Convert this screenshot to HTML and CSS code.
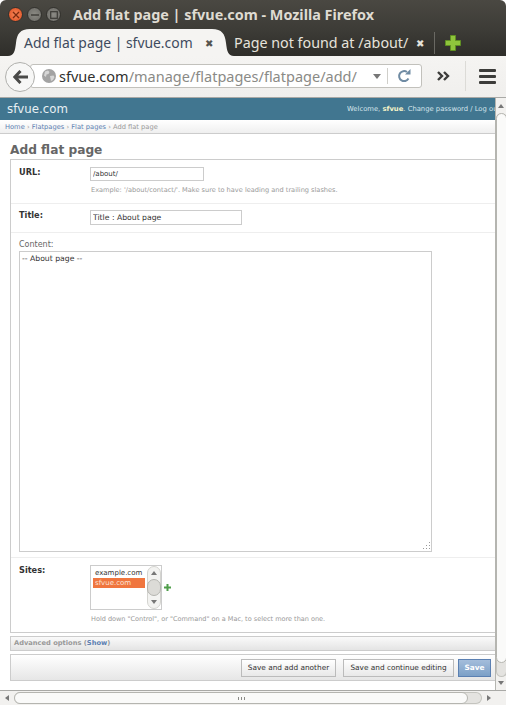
FILE: index.html
```html
<!doctype html>
<html>
<head>
<meta charset="UTF-8">
<title>Add flat page | sfvue.com</title>
	<link rel="stylesheet" href="styles.css">
</head>

<body>
<div class="window">
	<div class="titlebar">
		<span class="winbtn winclose"><svg width="8" height="8" viewBox="0 0 8 8"><path d="M1 1l6 6M7 1l-6 6" stroke="#7a2a10" stroke-width="1.3"/></svg></span>
		<span class="winbtn winmin"><svg width="8" height="8" viewBox="0 0 8 8"><path d="M0 4h8" stroke="#3b3a36" stroke-width="1.4"/></svg></span>
		<span class="winbtn winmax"><svg width="8" height="8" viewBox="0 0 8 8"><rect x=".7" y=".7" width="6.6" height="6.6" fill="none" stroke="#3b3a36" stroke-width="1.2"/></svg></span>
		<span class="wintitle">Add flat page | sfvue.com - Mozilla Firefox</span>
	</div>

	<div class="tabbar">
		<div class="tab active">
			<svg class="tabshape" viewBox="0 0 226 27" preserveAspectRatio="none"><path d="M0 27C6 27 7 22 8 14C9 5 12 0 22 0H204C214 0 217 5 218 14C219 22 220 27 226 27Z" fill="#f5f4f2"/></svg>
			<span class="tabtext">Add flat page | sfvue.com</span>
			<span class="tabx">&#10006;</span>
		</div>
		<div class="tab other">
			<span class="tabtext">Page not found at /about/</span>
			<span class="tabx">&#10006;</span>
		</div>
		<span class="tabsep"></span>
		<svg class="newtab" width="16" height="16" viewBox="0 0 16 16"><path d="M5.5 0.5h5v5h5v5h-5v5h-5v-5h-5v-5h5z" fill="#8fc43c" stroke="#5f8f22"/></svg>
	</div>

	<div class="navbar">
		<div class="urlbar">
			<svg class="globe" width="14" height="14" viewBox="0 0 14 14"><circle cx="7" cy="7" r="7" fill="#a3a3a3"/><path d="M3 2.5l3-1 1.5 1.5-1 2-2 .5-.5 2.5-2-1.5zM8 7l3.500-.5 1 1.500-1.500 3-2 1-.5-2.500z" fill="#d6d6d6"/></svg>
			<span class="url"><span class="host">sfvue.com</span>/manage/flatpages/flatpage/add/</span>
			<span class="urldrop"></span>
			<span class="urlsep"></span>
			<svg class="reload" width="14" height="14" viewBox="0 0 14 14"><path d="M11.500 9.500A5 5 0 1 1 10 3" fill="none" stroke="#6f8ba3" stroke-width="2"/><path d="M8 5.500h5.500V0z" fill="#6f8ba3"/></svg>
		</div>
		<div class="backbtn">
			<svg width="15" height="14" viewBox="0 0 15 14"><path d="M7.500 1L1.800 7l5.700 6M2.500 7H15" fill="none" stroke="#4a4a48" stroke-width="3"/></svg>
		</div>
		<svg class="chevrons" width="14" height="10" viewBox="0 0 14 10"><path d="M1 1l4 4-4 4M7 1l4 4-4 4" fill="none" stroke="#3c3c3a" stroke-width="2.400"/></svg>
		<span class="navsep"></span>
		<div class="hamburger"><span></span><span></span><span></span></div>
	</div>

	<div class="view">
		<div class="page">
			<div class="header">
				<div class="branding">sfvue.com</div>
				<div class="usertools">Welcome, <b>sfvue</b>. Change password / Log out</div>
			</div>
			<div class="breadcrumbs"><a>Home</a> &rsaquo; <a>Flatpages</a> &rsaquo; <a>Flat pages</a> &rsaquo; Add flat page</div>
			<div class="content">
				<h1>Add flat page</h1>
				<div class="fieldset">
					<div class="row row-url">
						<div class="field">
							<label class="req">URL:</label>
							<input class="url-input" type="text" value="/about/">
						</div>
						<p class="help">Example: '/about/contact/'. Make sure to have leading and trailing slashes.</p>
					</div>
					<div class="row row-title">
						<div class="field">
							<label class="req">Title:</label>
							<input class="title-input" type="text" value="Title : About page">
						</div>
					</div>
					<div class="row row-content">
						<label class="plain">Content:</label>
						<div class="body-wrap">
							<textarea class="body-input">-- About page --</textarea>
							<svg class="resizer" width="10" height="10" viewBox="0 0 10 10"><path d="M8 1h1v1H8zM5 4h1v1H5zM8 4h1v1H8zM2 7h1v1H2zM5 7h1v1H5zM8 7h1v1H8z" fill="#9a9a9a"/></svg>
						</div>
					</div>
					<div class="row row-sites">
						<div class="field">
							<label class="req">Sites:</label>
							<div class="listbox">
								<div class="options">
									<div class="option">example.com</div>
									<div class="option selected">sfvue.com</div>
								</div>
								<div class="listscroll">
									<span class="tri tri-up"></span>
									<span class="listthumb"></span>
									<span class="tri tri-down"></span>
								</div>
							</div>
							<svg class="addsite" width="7" height="7" viewBox="0 0 7 7"><path d="M2.500 0h2v2.500H7v2H4.500V7h-2V4.500H0v-2h2.500z" fill="#4f9e4a"/></svg>
						</div>
						<p class="help help-sites">Hold down "Control", or "Command" on a Mac, to select more than one.</p>
					</div>
				</div>
				<div class="advanced">Advanced options (<a>Show</a>)</div>
				<div class="submitrow">
					<button class="btn btn-add">Save and add another</button>
					<button class="btn btn-continue">Save and continue editing</button>
					<button class="btn btn-default">Save</button>
				</div>
			</div>
		</div>
		<div class="vscroll">
			<span class="tri tri-up"></span>
			<span class="vtrough"><span class="vthumb"></span></span>
			<span class="tri tri-down"></span>
		</div>
	</div>

	<div class="hscroll">
		<span class="tri tri-left"></span>
		<span class="htrough"><span class="hthumb"><span class="grip"></span></span></span>
		<span class="tri tri-right"></span>
	</div>
</div>
</body>
</html>
```

FILE: styles.css
```css
* {
	box-sizing: border-box;
}

html, body {
	margin: 0;
	padding: 0;
	background-color: #FFFFFF;
}

.window {
	width: 506px;
	height: 705px;
	display: flex;
	flex-direction: column;
	overflow: hidden;
	font-family: "Noto Sans", sans-serif;
}

/* window title */
.titlebar {
	height: 29px;
	flex: none;
	display: flex;
	align-items: center;
	padding-left: 8px;
	background: linear-gradient(#4a4842, #3d3c37);
	border-radius: 6px 6px 0 0;
}

.winbtn {
	width: 15px;
	height: 15px;
	border-radius: 50%;
	margin-right: 4px;
	display: flex;
	align-items: center;
	justify-content: center;
	background: radial-gradient(#8b8a84, #6b6a65);
	border: 1px solid #33322e;
}

.winclose {
	background: radial-gradient(#f58a5c, #df4a1c);
}

.wintitle {
	margin-left: 8px;
	font-size: 14.4px;
	font-weight: bold;
	color: #DFDBD2;
	white-space: nowrap;
}

/* tabs */
.tabbar {
	height: 27px;
	flex: none;
	display: flex;
	align-items: center;
	padding-left: 8px;
	background: linear-gradient(#3d3c37, #2f2e2a);
}

.tab {
	position: relative;
	height: 27px;
	display: flex;
	align-items: center;
	font-size: 14.3px;
	white-space: nowrap;
}

.tab.active {
	width: 226px;
	padding-left: 16px;
	font-size: 13.9px;
	color: #3e4b5e;
}

.tabshape {
	position: absolute;
	left: 0;
	top: 0;
	width: 100%;
	height: 100%;
}

.tab .tabtext, .tab .tabx {
	position: relative;
}

.tab .tabx {
	font-size: 10px;
}

.tab.active .tabx {
	margin-left: 12px;
	color: #55544f;
}

.tab.other {
	width: 200px;
	color: #E6E3DC;
}

.tab.other .tabx {
	margin-left: 8px;
	color: #E6E3DC;
}

.tabsep {
	width: 1px;
	height: 22px;
	background-color: #6a6963;
}

.newtab {
	margin-left: 10px;
}

/* toolbar */
.navbar {
	position: relative;
	height: 42px;
	flex: none;
	display: flex;
	align-items: center;
	padding-left: 30px;
	padding-bottom: 1px;
	background: linear-gradient(#f5f4f2, #f0efed);
	border-bottom: 1px solid #a9a9a6;
}

.backbtn {
	position: absolute;
	left: 5px;
	top: 6px;
	width: 30px;
	height: 30px;
	border-radius: 50%;
	display: flex;
	align-items: center;
	justify-content: center;
	background-color: #f7f7f6;
	border: 1px solid #b0b0ad;
}

.urlbar {
	width: 392px;
	height: 24px;
	display: flex;
	align-items: center;
	padding-left: 11px;
	background-color: #FFFFFF;
	border: 1px solid #c2c1bc;
	border-radius: 3px;
}

.url {
	margin-left: 3px;
	width: 301px;
	font-size: 14.5px;
	color: #8a8a86;
	white-space: nowrap;
	overflow: hidden;
}

.host {
	color: #2f2f2d;
}

.urldrop {
	margin-left: 13px;
	border-left: 4px solid transparent;
	border-right: 4px solid transparent;
	border-top: 5px solid #777;
}

.urlsep {
	margin-left: 6px;
	width: 1px;
	height: 16px;
	background-color: #d0cfca;
}

.reload {
	margin-left: 9px;
}

.chevrons {
	margin-left: 15px;
}

.navsep {
	margin-left: 14px;
	width: 1px;
	height: 30px;
	background-color: #dcdbd7;
}

.hamburger {
	margin-left: 13px;
	width: 17px;
	display: flex;
	flex-direction: column;
	gap: 3px;
}

.hamburger span {
	height: 3px;
	background-color: #3c3c3a;
	border-radius: 1px;
}

/* page */
.view {
	flex: 1;
	min-height: 0;
	display: flex;
}

.page {
	width: 495px;
	flex: none;
	overflow: hidden;
	font-family: "DejaVu Sans", sans-serif;
	font-size: 6.7px;
	color: #333333;
}

.header {
	height: 22px;
	display: flex;
	justify-content: space-between;
	align-items: center;
	padding-left: 7px;
	background-color: #417690;
	color: #FFFFFF;
}

.branding {
	font-size: 11.8px;
	color: #E8F0F4;
}

.usertools {
	white-space: nowrap;
	flex: none;
	width: 148px;
	overflow: hidden;
	font-size: 6.8px;
	color: #D5E5EC;
}

.usertools b {
	color: #F5F3C8;
}

.breadcrumbs {
	height: 14px;
	padding: 3px 0 0 5px;
	background: linear-gradient(#FFFFFF, #EFEFEF);
	border-bottom: 1px solid #CCCCCC;
	font-size: 6.7px;
	color: #999999;
}

.breadcrumbs a, .advanced a {
	color: #5b80b2;
}

.content {
	padding: 8px 0 0 10px;
	width: 520px;
}

h1 {
	margin: 0 0 1px 0;
	font-size: 12.2px;
	line-height: 16px;
	color: #666666;
}

.fieldset {
	border: 1px solid #CCCCCC;
	border-right: 0;
}

.row {
	padding-left: 8px;
	border-bottom: 1px solid #EEEEEE;
}

.row:last-child {
	border-bottom: 0;
}

.field {
	display: flex;
	align-items: flex-start;
}

.req {
	width: 71px;
	font-size: 8.2px;
	line-height: 11px;
	font-weight: bold;
	color: #333333;
}

.plain {
	display: block;
	font-size: 8px;
	line-height: 10px;
	color: #666666;
}

input {
	padding: 0 2px;
	height: 14px;
	border: 1px solid #CCCCCC;
	font-family: "DejaVu Sans", sans-serif;
	font-size: 7px;
	color: #333333;
	background-color: #FFFFFF;
	outline: none;
}

.url-input {
	width: 114px;
}

.title-input {
	width: 152px;
	height: 15px;
	font-size: 7.7px;
}

.help {
	margin: 5px 0 0 72px;
	font-size: 6.6px;
	line-height: 9px;
	color: #999999;
}

.help-sites {
	font-size: 6.53px;
}

.row-url {
	height: 44px;
	padding-top: 7px;
}

.row-title {
	height: 29px;
	padding-top: 6px;
}

.row-content {
	height: 325px;
	padding-top: 7px;
}

.body-wrap {
	position: relative;
	margin-top: 1px;
	width: 413px;
}

.body-input {
	display: block;
	width: 413px;
	height: 301px;
	padding: 2px;
	border: 1px solid #CCCCCC;
	font-family: "DejaVu Sans", sans-serif;
	font-size: 7.7px;
	color: #333333;
	outline: none;
	resize: none;
}

.resizer {
	position: absolute;
	right: 1px;
	bottom: 1px;
}

.row-sites {
	height: 74px;
	padding-top: 7px;
}

.listbox {
	width: 72px;
	height: 45px;
	display: flex;
	border: 1px solid #CCCCCC;
	background-color: #FFFFFF;
}

.options {
	flex: 1;
	padding: 2px 2px 0 2px;
}

.option {
	height: 10px;
	line-height: 10px;
	padding-left: 2px;
	font-size: 7px;
}

.option.selected {
	background-color: #f0763f;
	color: #FBE3D6;
}

.listscroll {
	width: 14px;
	display: flex;
	flex-direction: column;
	align-items: center;
	padding: 4px 0;
	border: 1px solid #d4d4d0;
	border-radius: 7px;
	background-color: #f3f3f1;
}

.listthumb {
	width: 14px;
	height: 17px;
	margin: 4px 0 auto 0;
	border: 1px solid #b5b5b0;
	border-radius: 7px;
	background-color: #dcdbd7;
}

.addsite {
	margin: 19px 0 0 2px;
}

.advanced {
	margin-top: 3px;
	height: 15px;
	padding-left: 3px;
	line-height: 13px;
	border: 1px solid #CCCCCC;
	border-right: 0;
	background: linear-gradient(#FAFAFA, #E4E4E4);
	font-weight: bold;
	color: #999999;
}

.submitrow {
	margin-top: 3px;
	height: 27px;
	display: flex;
	align-items: center;
	padding-left: 230px;
	border: 1px solid #CCCCCC;
	border-right: 0;
	background: linear-gradient(#FFFFFF, #E6E6E6);
}

.btn {
	height: 18px;
	padding: 0;
	border: 1px solid #BBBBBB;
	background: linear-gradient(#FFFFFF, #E8E8E8);
	font-family: "DejaVu Sans", sans-serif;
	font-size: 7.35px;
	color: #333333;
	white-space: nowrap;
}

.btn-add {
	width: 95px;
}

.btn-continue {
	width: 111px;
	margin-left: 7px;
}

.btn-default {
	width: 33px;
	margin-left: 4px;
	border-color: #5b80b2;
	background: linear-gradient(#A4BDDB, #7CA0C7);
	font-weight: bold;
	color: #FFFFFF;
}

/* scrollbars */
.tri {
	flex: none;
	width: 0;
	height: 0;
}

.tri-up {
	border-left: 3px solid transparent;
	border-right: 3px solid transparent;
	border-bottom: 4px solid #777;
}

.tri-down {
	border-left: 3px solid transparent;
	border-right: 3px solid transparent;
	border-top: 4px solid #777;
}

.tri-left {
	border-top: 3px solid transparent;
	border-bottom: 3px solid transparent;
	border-right: 4px solid #777;
}

.tri-right {
	border-top: 3px solid transparent;
	border-bottom: 3px solid transparent;
	border-left: 4px solid #777;
}

.vscroll {
	width: 11px;
	flex: none;
	display: flex;
	flex-direction: column;
	align-items: center;
	padding: 6px 0 5px 0;
	background-color: #f2f1ef;
	border-left: 1px solid #b5b5b0;
}

.vtrough {
	width: 11px;
	flex: 1;
	margin: 5px 0 4px 0;
	padding-bottom: 13px;
	display: flex;
	border: 1px solid #c4c4bf;
	border-top: 0;
	border-radius: 6px;
	background-color: #e4e3e0;
}

.vthumb {
	flex: 1;
	margin: 0 -1px;
	border: 1px solid #b5b5b0;
	border-radius: 6px;
	background-color: #FAFAF9;
}

.hscroll {
	height: 15px;
	flex: none;
	display: flex;
	align-items: center;
	padding: 0 15px 0 5px;
	background-color: #f2f1ef;
	border-top: 1px solid #a9a9a6;
}

.htrough {
	flex: 1;
	height: 12px;
	margin: 0 5px;
	padding-right: 13px;
	display: flex;
	border: 1px solid #c4c4bf;
	border-left: 0;
	border-radius: 6px;
	background-color: #e4e3e0;
}

.hthumb {
	flex: 1;
	margin: -1px 0;
	display: flex;
	align-items: center;
	justify-content: center;
	border: 1px solid #b5b5b0;
	border-radius: 6px;
	background-color: #FAFAF9;
}

.grip {
	width: 7px;
	height: 3px;
	background: repeating-linear-gradient(90deg, #8a8a86 0 1px, transparent 1px 3px);
}
```
